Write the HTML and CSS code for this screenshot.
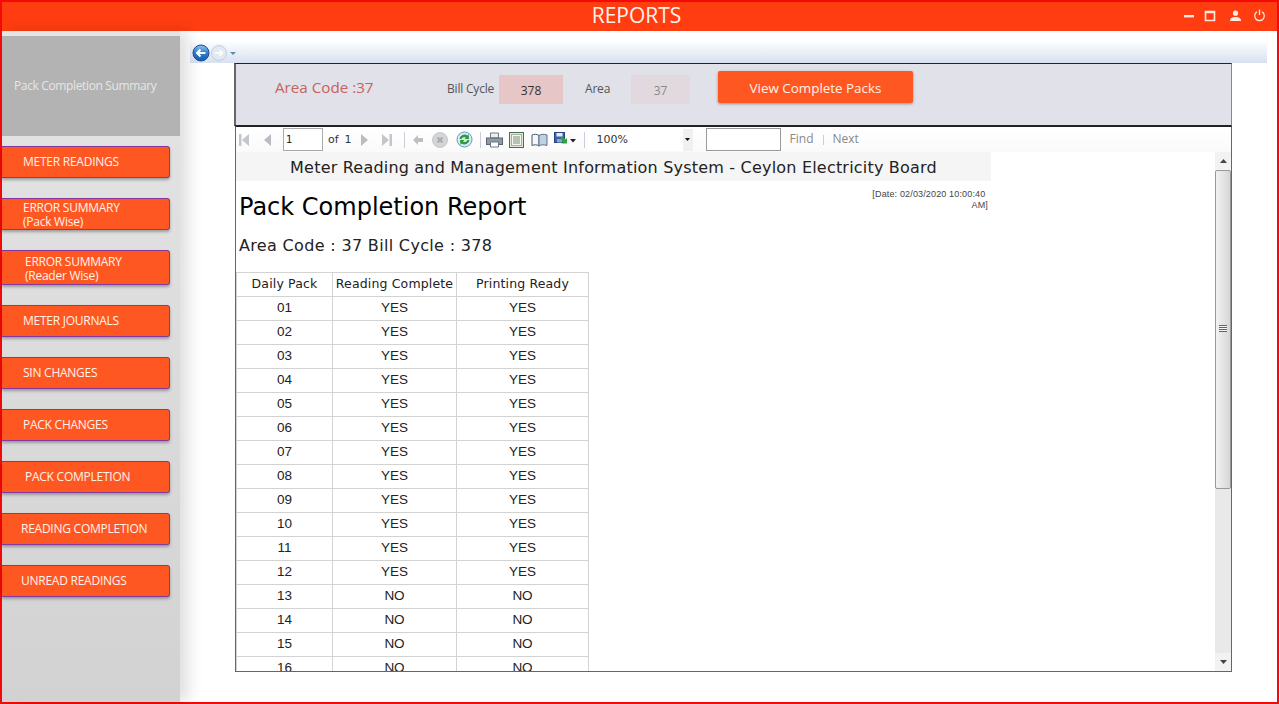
FILE: index.html
```html
<!DOCTYPE html>
<html>
<head>
  <meta charset="utf-8">
  <title>Reports</title>
  <link rel="stylesheet" href="styles.css">
</head>
<body>
  <div class="window">
    <header class="titlebar">
      <div class="title">REPORTS</div>
      <div class="window-icons">
        <svg width="12" height="12" viewBox="0 0 12 12"><rect x="1" y="5" width="10" height="2.4" fill="#fde9e0"/></svg>
        <svg width="12" height="12" viewBox="0 0 12 12"><path d="M1.500 1.500h9v9h-9z M1.500 2.500h9" fill="none" stroke="#fde9e0" stroke-width="1.600"/></svg>
        <svg class="icon-user" width="13" height="12" viewBox="0 0 13 12"><circle cx="6.500" cy="3.200" r="2.600" fill="#fde9e0"/><path d="M1 11c0-3 2-4 5.500-4s5.500 1 5.500 4z" fill="#fde9e0"/></svg>
        <svg class="icon-power" width="13" height="13" viewBox="0 0 13 13"><path d="M4 2.800a4.800 4.800 0 1 0 5 0 M6.500 .5v5.500" fill="none" stroke="#fde9e0" stroke-width="1.300"/></svg>
      </div>
    </header>

    <div class="content">
      <aside class="sidebar">
        <div class="side-head">Pack Completion Summary</div>
        <a class="side-btn">METER READINGS</a>
        <a class="side-btn two-line">ERROR SUMMARY<br>(Pack Wise)</a>
        <a class="side-btn two-line tall shift">ERROR SUMMARY<br>(Reader Wise)</a>
        <a class="side-btn">METER JOURNALS</a>
        <a class="side-btn">SIN CHANGES</a>
        <a class="side-btn">PACK CHANGES</a>
        <a class="side-btn shift">PACK COMPLETION</a>
        <a class="side-btn wide">READING COMPLETION</a>
        <a class="side-btn wide">UNREAD READINGS</a>
      </aside>

      <main class="main">
        <div class="nav-strip">
          <svg width="48" height="20" viewBox="0 0 48 20">
            <defs>
              <linearGradient id="back-fill" x1="0" y1="0" x2="0" y2="1">
                <stop offset="0" stop-color="#8fc4ee"/>
                <stop offset="0.5" stop-color="#2a7fd0"/>
                <stop offset="1" stop-color="#1a5aa8"/>
              </linearGradient>
            </defs>
            <circle cx="11" cy="10" r="8" fill="url(#back-fill)" stroke="#1a4f94"/>
            <path d="M15.500 10h-8M10.500 6.500l-3.500 3.500 3.500 3.500" fill="none" stroke="#fff" stroke-width="2"/>
            <circle cx="29" cy="10" r="7.500" fill="#e3e9f3" stroke="#c3cede"/>
            <path d="M25 10h7M29.500 7l3 3-3 3" fill="none" stroke="#fff" stroke-width="1.500"/>
            <path d="M40 9h6l-3 3z" fill="#5b8db0"/>
          </svg>
        </div>

        <section class="filter-panel">
          <div class="area-code">Area Code :37</div>
          <label class="filter-label label-cycle">Bill Cycle</label>
          <div class="filter-box">378</div>
          <label class="filter-label label-area">Area</label>
          <div class="filter-box disabled">37</div>
          <button class="view-btn">View Complete Packs</button>
        </section>

        <section class="viewer">
          <div class="toolbar">
            <svg class="tb-icon first" width="12" height="14" viewBox="0 0 12 14"><path d="M1 1h2.500v12H1z M11 1v12L4 7z" fill="#c3c7cc"/></svg>
            <svg class="tb-icon prev" width="9" height="14" viewBox="0 0 9 14"><path d="M8 1v12L1 7z" fill="#b9bdc2"/></svg>
            <div class="page-box">1</div>
            <span class="tb-text of">of</span>
            <span class="tb-text total">1</span>
            <svg class="tb-icon next" width="9" height="14" viewBox="0 0 9 14"><path d="M1 1v12l7-6z" fill="#b9bdc2"/></svg>
            <svg class="tb-icon last" width="12" height="14" viewBox="0 0 12 14"><path d="M1 1v12l7-6z M8.500 1H11v12H8.500z" fill="#c3c7cc"/></svg>
            <span class="tb-sep"></span>
            <svg class="tb-icon back" width="11" height="10" viewBox="0 0 11 10"><path d="M5 0v3h5v4H5v3L0 5z" fill="#bcc0c4"/></svg>
            <svg class="tb-icon stop" width="16" height="16" viewBox="0 0 16 16"><circle cx="8" cy="8" r="7.500" fill="#d4d5d7" stroke="#c4c6c9"/><path d="M5.500 5.500l5 5m0-5l-5 5" stroke="#a9abae" stroke-width="2"/></svg>
            <svg class="tb-icon refresh" width="17" height="17" viewBox="0 0 17 17"><circle cx="8.500" cy="8.500" r="7.500" fill="#d8ebf8" stroke="#5a9ccb"/><path d="M3.500 8a5 5 0 0 1 8-3.500l1-1.500.5 5h-4.500l1.500-1.500a3 3 0 0 0-4.500 1.500z" fill="#2d9a38"/><path d="M13.500 9a5 5 0 0 1-8 3.500l-1 1.500-.5-5h4.500L7 10.500a3 3 0 0 0 4.500-1.500z" fill="#2d9a38"/></svg>
            <span class="tb-sep tight"></span>
            <svg class="tb-icon print" width="17" height="16" viewBox="0 0 17 16"><path d="M4.500 1h8v5h-8z" fill="#eee" stroke="#6f7a85"/><rect x=".5" y="6" width="16" height="6.500" fill="#8d99a5" stroke="#5c6670"/><path d="M4.500 10h8v5h-8z" fill="#fff" stroke="#6f7a85"/></svg>
            <svg class="tb-icon layout" width="15" height="16" viewBox="0 0 15 16"><rect x=".5" y=".5" width="14" height="15" fill="#dfe9d4" stroke="#4f6a55"/><rect x="2.500" y="2.500" width="10" height="11" fill="#f4f7f0" stroke="#a3b3a3"/><path d="M4 5h7M4 7h7M4 9h7M4 11h7" stroke="#7b8b80"/></svg>
            <svg class="tb-icon setup" width="17" height="14" viewBox="0 0 17 14"><path d="M1 2c2-1 5-1 7 .5V13c-2-1.500-5-1.500-7-.5z" fill="#f4f6fa" stroke="#46566b"/><path d="M8 2.500C10 1 13 1 16 2v10.500c-3-1-6-1-8 .5z" fill="#bcd0e6" stroke="#5d6f85"/></svg>
            <svg class="tb-icon save" width="14" height="16" viewBox="0 0 14 16"><rect x=".5" y=".5" width="10" height="10" fill="#3a62b0" stroke="#2a4280"/><rect x="2.500" y="1" width="6" height="3.500" fill="#e8eef8"/><rect x="3" y="7" width="5" height="3.500" fill="#8fa4cc"/><path d="M6.500 6.500l2-2 3 3 1.500-1.500v5.500H7.500L9 10z" fill="#2da33a"/></svg>
            <svg class="tb-icon caret" width="6" height="4" viewBox="0 0 6 4"><path d="M0 0h6L3 3.500z" fill="#222"/></svg>
            <span class="tb-sep zoom-sep"></span>
            <div class="zoom-select"><span>100%</span><i class="zoom-arrow"><svg width="5" height="3" viewBox="0 0 5 3"><path d="M0 0h5L2.500 3z" fill="#111"/></svg></i></div>
            <div class="find-box"></div>
            <span class="tb-link find">Find</span>
            <span class="tb-sep small"></span>
            <span class="tb-link">Next</span>
          </div>

          <div class="viewer-body">
            <div class="report">
              <div class="report-band">Meter Reading and Management Information System - Ceylon Electricity Board</div>
              <div class="report-date">[Date: 02/03/2020 10:00:40&nbsp;<br>AM]</div>
              <h1 class="report-title">Pack Completion Report</h1>
              <div class="report-sub">Area Code : 37 Bill Cycle : 378</div>
              <table class="pack-table">
                <thead>
                  <tr><th class="col-a">Daily Pack</th><th class="col-b">Reading Complete</th><th class="col-c">Printing Ready</th></tr>
                </thead>
                <tbody>
                  <tr><td>01</td><td>YES</td><td>YES</td></tr>
                  <tr><td>02</td><td>YES</td><td>YES</td></tr>
                  <tr><td>03</td><td>YES</td><td>YES</td></tr>
                  <tr><td>04</td><td>YES</td><td>YES</td></tr>
                  <tr><td>05</td><td>YES</td><td>YES</td></tr>
                  <tr><td>06</td><td>YES</td><td>YES</td></tr>
                  <tr><td>07</td><td>YES</td><td>YES</td></tr>
                  <tr><td>08</td><td>YES</td><td>YES</td></tr>
                  <tr><td>09</td><td>YES</td><td>YES</td></tr>
                  <tr><td>10</td><td>YES</td><td>YES</td></tr>
                  <tr><td>11</td><td>YES</td><td>YES</td></tr>
                  <tr><td>12</td><td>YES</td><td>YES</td></tr>
                  <tr><td>13</td><td>NO</td><td>NO</td></tr>
                  <tr><td>14</td><td>NO</td><td>NO</td></tr>
                  <tr><td>15</td><td>NO</td><td>NO</td></tr>
                  <tr><td>16</td><td>NO</td><td>NO</td></tr>
                </tbody>
              </table>
            </div>
            <div class="scrollbar">
              <div class="scroll-arrow"><svg width="7" height="4" viewBox="0 0 7 4"><path d="M3.500 0L7 4H0z" fill="#444"/></svg></div>
              <div class="scroll-thumb"><span class="grip"></span></div>
              <div class="scroll-track"></div>
              <div class="scroll-arrow"><svg width="7" height="4" viewBox="0 0 7 4"><path d="M0 0h7L3.500 4z" fill="#444"/></svg></div>
            </div>
          </div>
        </section>
      </main>
    </div>
  </div>
</body>
</html>
```

FILE: styles.css
```css
/* basic layout */
html, body {
  margin: 0;
  height: 100%;
  overflow: hidden;
}

body {
  font-family: "Open Sans", "Noto Sans", sans-serif;
  background: #fff;
}

.window {
  box-sizing: border-box;
  width: 1279px;
  height: 704px;
  border: 2px solid #f50a0a;
  display: flex;
  flex-direction: column;
}

/* title bar */
.titlebar {
  position: relative;
  height: 29px;
  flex: none;
  background: #ff3d10;
  display: flex;
  align-items: center;
  justify-content: center;
}

.title {
  color: #fff2ea;
  font-size: 21px;
  margin: -4px 0 0 -6px;
}

.window-icons {
  position: absolute;
  right: 11px;
  top: 7px;
  display: flex;
  align-items: center;
  gap: 9px;
}

.icon-user {
  margin-left: 4px;
}

.icon-power {
  margin-left: 2px;
}

.content {
  flex: 1;
  display: flex;
  min-height: 0;
}

/* sidebar */
.sidebar {
  width: 178px;
  flex: none;
  padding-top: 5px;
  background: linear-gradient(#e5e5e5, #d2d2d2);
  box-shadow: 8px 0 14px rgba(0, 0, 0, 0.13);
  position: relative;
}

.side-head {
  box-sizing: border-box;
  height: 100px;
  margin-bottom: 10px;
  padding: 0 0 2px 12px;
  background: #b3b3b3;
  color: #e6e6e6;
  font-size: 12px;
  display: flex;
  align-items: center;
  letter-spacing: -0.36px;
}

.side-btn {
  box-sizing: border-box;
  display: flex;
  flex-direction: column;
  justify-content: center;
  height: 32px;
  width: 168px;
  margin-bottom: 20px;
  padding-left: 21px;
  padding-bottom: 2px;
  background: #ff5722;
  border: 1px solid #84389a;
  border-left: none;
  border-radius: 0 3px 3px 0;
  box-shadow: 0 2px 3px rgba(0, 0, 0, 0.3);
  color: #fff3ea;
  font-size: 12px;
  letter-spacing: -0.25px;
}

.side-btn.two-line {
  display: block;
  padding-top: 2px;
  padding-bottom: 0;
  line-height: 14px;
}

.side-btn.tall {
  height: 35px;
  padding-top: 4px;
}

.side-btn.shift {
  padding-left: 23px;
}

.side-btn.wide {
  padding-left: 19px;
}

/* main area */
.main {
  flex: 1;
  min-width: 0;
  padding-top: 11px;
  display: flex;
  flex-direction: column;
  align-items: flex-start;
  padding-left: 10px;
}

.nav-strip {
  width: 1077px;
  height: 21px;
  flex: none;
  background: linear-gradient(#fbfcfe, #d8e1f0);
  display: flex;
  align-items: center;
}

.filter-panel {
  box-sizing: border-box;
  width: 998px;
  height: 63px;
  padding-bottom: 10px;
  margin-left: 44px;
  flex: none;
  background: #e0e1e9;
  border: 1px solid #222;
  border-left: 2px solid #666;
  border-right-color: #888;
  display: flex;
  align-items: center;
}

.area-code {
  width: 211px;
  padding-left: 39px;
  box-sizing: border-box;
  font-size: 15.2px;
  color: #c8625c;
  margin-top: -6px;
}

.filter-label {
  font-size: 12px;
  color: #555;
  letter-spacing: -0.2px;
  margin-top: -2px;
}

.label-cycle {
  width: 51px;
}

.label-area {
  width: 45px;
  margin-left: 22px;
}

.filter-box {
  box-sizing: border-box;
  width: 64px;
  height: 29px;
  padding-top: 2px;
  background: #e6c6c6;
  color: #333;
  font-size: 12px;
  display: flex;
  align-items: center;
  justify-content: center;
  margin-left: 1px;
}

.filter-box.disabled {
  width: 59px;
  background: #e2d9df;
  color: #888;
}

.view-btn {
  width: 195px;
  height: 32px;
  margin-left: 28px;
  margin-top: -6px;
  border: none;
  border-radius: 2px;
  background: #ff5722;
  box-shadow: 0 1px 3px rgba(0, 0, 0, 0.35);
  color: #fff3ea;
  font-family: inherit;
  font-size: 13.4px;
  padding: 3px 0 0;
}

/* report viewer */
.viewer {
  box-sizing: border-box;
  width: 997px;
  height: 546px;
  margin-left: 45px;
  flex: none;
  border: 1px solid #666;
  border-top-color: #222;
  display: flex;
  flex-direction: column;
}

.toolbar {
  height: 25px;
  flex: none;
  display: flex;
  align-items: center;
  background: linear-gradient(#fff, #fafafa);
  font-size: 12px;
  color: #555;
}

.tb-icon {
  flex: none;
}

.tb-icon.first { margin-left: 2px; }
.tb-icon.prev { margin-left: 13px; }
.tb-icon.next { margin-left: 8px; }
.tb-icon.last { margin-left: 12px; }
.tb-icon.back { margin-left: 8px; }
.tb-icon.stop { margin-left: 8px; }
.tb-icon.refresh { margin-left: 8px; }
.tb-icon.print { margin-left: 5px; }
.tb-icon.layout { margin-left: 6px; }
.tb-icon.setup { margin-left: 7px; }
.tb-icon.save { margin-left: 6px; }
.tb-icon.caret { margin-left: 2px; margin-top: 2px; }

.page-box {
  box-sizing: border-box;
  width: 40px;
  height: 23px;
  margin-left: 11px;
  border: 1px solid #aaa;
  padding-left: 2px;
  background: #fff;
  line-height: 21px;
  font-family: "DejaVu Sans", sans-serif;
  font-size: 10px;
  color: #222;
}

.tb-text {
  font-family: "DejaVu Sans", sans-serif;
  font-size: 11px;
  color: #333;
}

.tb-text.of { margin-left: 5px; }
.tb-text.total { margin-left: 6px; }

.tb-sep {
  width: 1px;
  height: 16px;
  margin-left: 11px;
  background: #ccd;
  flex: none;
}

.tb-sep.tight { margin-left: 7px; }
.tb-sep.zoom-sep { margin-left: 8px; }
.tb-sep.small { height: 10px; margin: 0 9px; }

.zoom-select {
  width: 105px;
  height: 22px;
  margin-left: 3px;
  display: flex;
  align-items: center;
  justify-content: space-between;
  background: #fff;
  font-family: "DejaVu Sans", sans-serif;
  font-size: 11px;
  color: #333;
  box-sizing: border-box;
  padding-left: 9px;
}

.zoom-arrow {
  width: 10px;
  height: 22px;
  background: #f0f0f0;
  display: flex;
  align-items: center;
  justify-content: center;
}

.find-box {
  box-sizing: border-box;
  width: 75px;
  height: 23px;
  margin-left: 13px;
  border: 1px solid #999;
  background: #fff;
}

.tb-link {
  font-size: 12px;
  color: #888;
  margin-top: -2px;
}

.tb-link.find {
  margin-left: 9px;
}

.viewer-body {
  flex: 1;
  display: flex;
  min-height: 0;
}

.report {
  flex: 1;
  min-width: 0;
  overflow: hidden;
  font-family: "DejaVu Sans", sans-serif;
  background: #fff;
}

.report-band {
  width: 755px;
  height: 29px;
  background: #f5f5f5;
  text-align: center;
  line-height: 31px;
  font-size: 16px;
  letter-spacing: 0.2px;
  color: #222;
}

.report-date {
  width: 752px;
  height: 0;
  text-align: right;
  font-family: "Liberation Sans", sans-serif;
  font-size: 9px;
  letter-spacing: 0.15px;
  line-height: 11px;
  padding-top: 8px;
  color: #444;
}

.report-title {
  margin: 2px 0 0 3px;
  font-weight: normal;
  font-size: 24px;
  line-height: 32px;
  color: #000;
}

.report-sub {
  margin: 12px 0 0 3px;
  font-size: 16px;
  letter-spacing: 0.33px;
  line-height: 22px;
  color: #222;
}

/* table */
.pack-table {
  border-collapse: collapse;
  table-layout: fixed;
  width: 352px;
  margin: 15px 0 0 0;
}

.pack-table th, .pack-table td {
  height: 24px;
  padding: 0 0 2px;
  border: 1px solid #d3d3d3;
  text-align: center;
  box-sizing: border-box;
  font-size: 12.5px;
  letter-spacing: 0.15px;
  font-weight: normal;
  color: #222;
}

.pack-table td {
  font-family: "Liberation Sans", sans-serif;
  font-size: 13.5px;
  letter-spacing: 0;
}

.col-a { width: 96px; }
.col-b { width: 124px; }
.col-c { width: 132px; }

/* scrollbar */
.scrollbar {
  width: 16px;
  flex: none;
  background: #e9e9e9;
  display: flex;
  flex-direction: column;
}

.scroll-arrow {
  height: 18px;
  flex: none;
  background: #f2f2f2;
  display: flex;
  align-items: center;
  justify-content: center;
}

.scroll-thumb {
  box-sizing: border-box;
  height: 319px;
  flex: none;
  border: 1px solid #999;
  border-radius: 2px;
  background: linear-gradient(90deg, #f2f2f2, #d6d6d6);
  display: flex;
  align-items: center;
  justify-content: center;
}

.grip {
  width: 8px;
  height: 7px;
  margin-right: 1px;
  margin-top: -2px;
  background: repeating-linear-gradient(#666 0 1px, #f4f4f4 1px 2px);
}

.scroll-track {
  flex: 1;
}
```
